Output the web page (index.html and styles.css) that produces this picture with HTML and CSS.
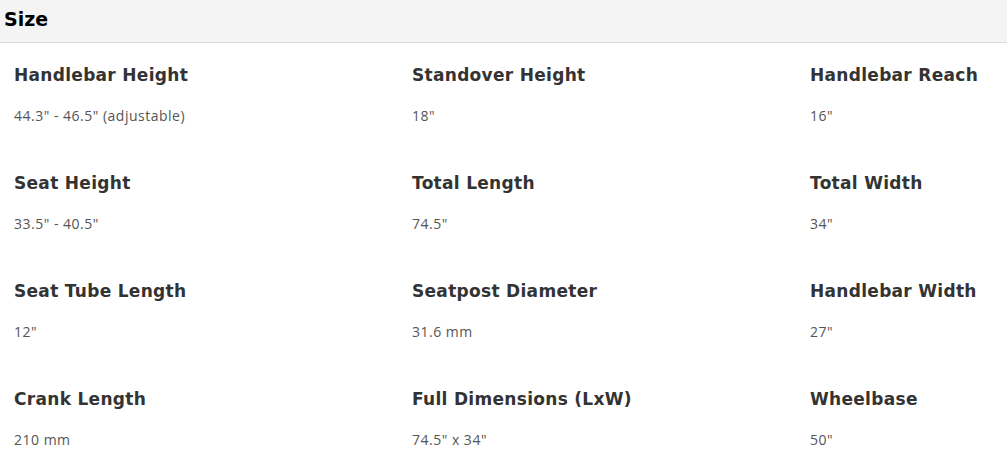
FILE: index.html
```html
<!DOCTYPE html>
<html>
<head>
<meta charset="utf-8">
<link rel="stylesheet" href="styles.css">
</head>
<body>
<div class="header"><h2 class="title">Size</h2></div>
<div class="grid">
  <div class="cell"><div class="label">Handlebar Height</div><div class="value">44.3" - 46.5" (adjustable)</div></div>
  <div class="cell"><div class="label">Standover Height</div><div class="value">18"</div></div>
  <div class="cell"><div class="label">Handlebar Reach</div><div class="value">16"</div></div>
  <div class="cell"><div class="label">Seat Height</div><div class="value">33.5" - 40.5"</div></div>
  <div class="cell"><div class="label">Total Length</div><div class="value">74.5"</div></div>
  <div class="cell"><div class="label">Total Width</div><div class="value">34"</div></div>
  <div class="cell"><div class="label">Seat Tube Length</div><div class="value">12"</div></div>
  <div class="cell"><div class="label">Seatpost Diameter</div><div class="value">31.6 mm</div></div>
  <div class="cell"><div class="label">Handlebar Width</div><div class="value">27"</div></div>
  <div class="cell"><div class="label">Crank Length</div><div class="value">210 mm</div></div>
  <div class="cell"><div class="label">Full Dimensions (LxW)</div><div class="value">74.5" x 34"</div></div>
  <div class="cell"><div class="label">Wheelbase</div><div class="value">50"</div></div>
</div>
</body>
</html>
```
FILE: styles.css
```css
html, body { margin: 0; padding: 0; background: #fff; }
body { font-family: "DejaVu Sans", sans-serif; color: #333; }
.header {
  height: 42px;
  background: #f4f4f4;
  border-bottom: 1px solid #dcdcdc;
  display: flex;
  align-items: center;
  padding-left: 4px;
}
.title {
  margin: 0;
  font-family: "DejaVu Sans", sans-serif;
  font-weight: 700;
  font-size: 19px;
  color: #000;
  line-height: 24px;
  margin-top: -4px;
}
.grid {
  display: grid;
  grid-template-columns: 398px 398px 1fr;
  row-gap: 47px;
  padding: 21px 0 0 14px;
}
.label {
  font-family: "DejaVu Sans", sans-serif;
  font-weight: 700;
  font-size: 17px;
  line-height: 22px;
  letter-spacing: 0.3px;
  color: #333;
}
.value {
  margin-top: 21px;
  font-family: "Open Sans", sans-serif;
  font-size: 14px;
  line-height: 18px;
  color: #555;
  letter-spacing: 0.5px;
}
```
